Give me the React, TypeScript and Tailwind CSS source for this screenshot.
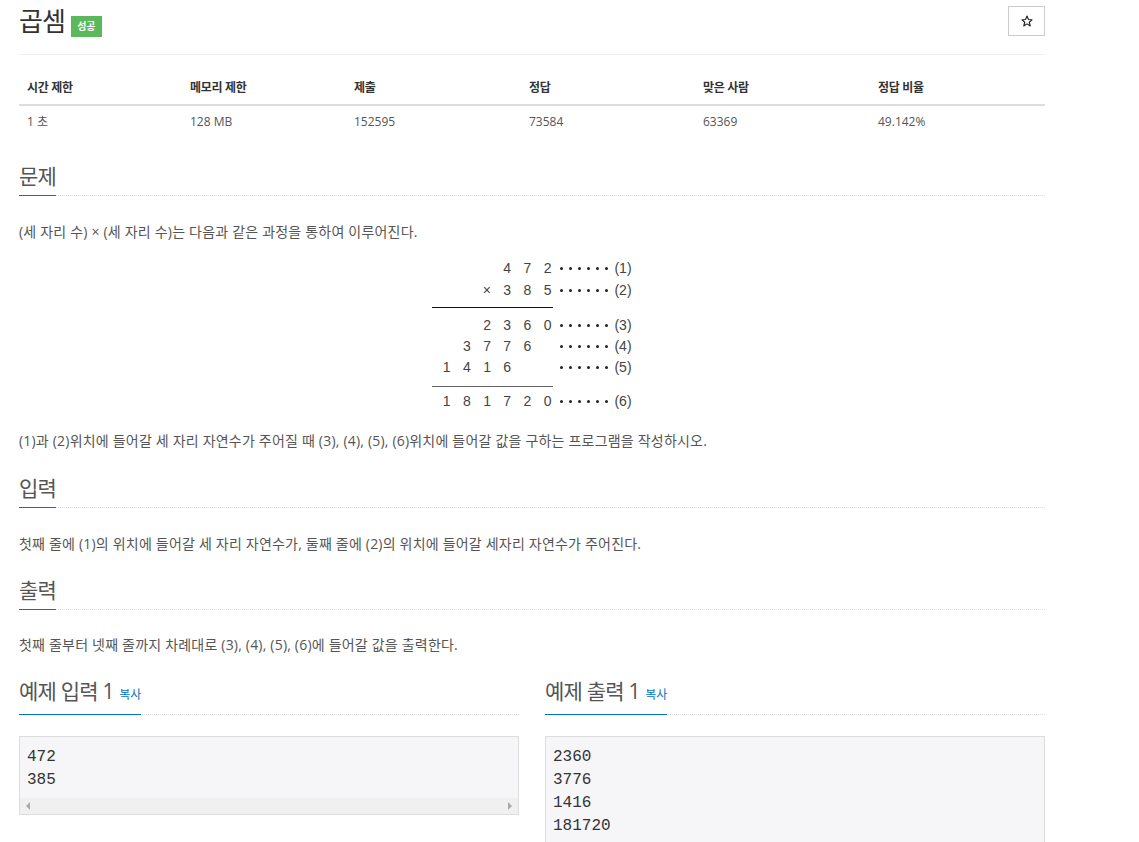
import React from "react";

const font = { fontFamily: '"Open Sans", "Noto Sans CJK KR", sans-serif' };

function Headline({ children, className = "" }: { children: React.ReactNode; className?: string }) {
  return (
    <div className={`border-b border-dotted border-[#ddd] ${className}`}>
      <h2 className="inline-block -mb-px border-b border-[#0076c0] pb-[5px] text-[21px] leading-[28px] font-normal text-[#555] tracking-[-0.8px]">
        {children}
      </h2>
    </div>
  );
}

function Dots() {
  return (
    <div className="flex w-[50px] items-center justify-between px-[1px]">
      {[0, 1, 2, 3, 4, 5].map((i) => (
        <span key={i} className="h-[3px] w-[3px] rounded-full bg-[#222]" />
      ))}
    </div>
  );
}

function FigRow({ cells, label, h = "h-[22px]" }: { cells: string[]; label: string; h?: string }) {
  return (
    <div className={`flex items-center ${h}`}>
      <div className="grid w-[121px] grid-cols-6">
        {cells.map((c, i) => (
          <span key={i} className="pr-[2px] text-right">
            {c}
          </span>
        ))}
      </div>
      <div className="ml-[6px]">
        <Dots />
      </div>
      <span className="ml-[5px]">{label}</span>
    </div>
  );
}

const cols = [
  ["시간 제한", "1 초", "w-[163px]"],
  ["메모리 제한", "128 MB", "w-[164px]"],
  ["제출", "152595", "w-[175px]"],
  ["정답", "73584", "w-[174px]"],
  ["맞은 사람", "63369", "w-[175px]"],
  ["정답 비율", "49.142%", ""],
];

export default function App() {
  return (
    <div className="min-h-screen bg-white" style={font}>
      <div className="ml-[19px] w-[1026px] text-[14px] text-[#555]">
        {/* title */}
        <div className="flex h-[55px] items-start justify-between border-b border-[#eee]">
          <div className="flex items-start pt-[6px]">
            <h1 className="text-[26px] leading-[30px] font-normal text-[#333] tracking-[-1px]">곱셈</h1>
            <span className="ml-[6px] mt-[10px] flex h-[21px] w-[31px] items-center justify-center bg-[#5cb85c] text-[10px] font-bold text-white">
              성공
            </span>
          </div>
          <button className="mt-[6px] flex h-[30px] w-[37px] items-center justify-center border border-[#ccc] bg-white">
            <svg width="12" height="12" viewBox="0 0 24 24" fill="none" stroke="#222" strokeWidth="2.2" strokeLinejoin="round">
              <polygon points="12,2 15,9 22,9.5 16.5,14.5 18.5,22 12,17.8 5.5,22 7.5,14.5 2,9.5 9,9" />
            </svg>
          </button>
        </div>

        {/* info table */}
        <table className="mt-[17px] w-full border-collapse">
          <thead>
            <tr className="h-[33px] border-b-2 border-[#ddd]">
              {cols.map(([h, , w]) => (
                <th key={h} className={`${w} pl-[8px] text-left text-[12px] font-bold text-[#333] tracking-[-0.3px]`}>
                  {h}
                </th>
              ))}
            </tr>
          </thead>
          <tbody>
            <tr className="h-[33px]">
              {cols.map(([h, v]) => (
                <td key={h} className="pl-[8px] text-[12px] text-[#555]">
                  {v}
                </td>
              ))}
            </tr>
          </tbody>
        </table>

        {/* 문제 */}
        <Headline className="mt-[24px]">문제</Headline>
        <p className="mt-[25px] leading-[22px] tracking-[0.2px]">(세 자리 수) × (세 자리 수)는 다음과 같은 과정을 통하여 이루어진다.</p>

        <div className="mt-[14px] flex justify-center">
          <div className="text-[14px] text-[#444]" style={{ fontFamily: '"Liberation Sans", sans-serif' }}>
            <FigRow cells={["", "", "", "4", "7", "2"]} label="(1)" />
            <FigRow cells={["", "", "×", "3", "8", "5"]} label="(2)" />
            <div className="my-[6px] h-px w-[121px] bg-[#111]" />
            <FigRow cells={["", "", "2", "3", "6", "0"]} label="(3)" />
            <FigRow cells={["", "3", "7", "7", "6", ""]} label="(4)" h="h-[21px]" />
            <FigRow cells={["1", "4", "1", "6", "", ""]} label="(5)" h="h-[21px]" />
            <div className="mb-[3px] mt-[8px] h-px w-[121px] bg-[#666]" />
            <FigRow cells={["1", "8", "1", "7", "2", "0"]} label="(6)" />
          </div>
        </div>

        <p className="mt-[18px] leading-[22px] tracking-[0.2px]">
          (1)과 (2)위치에 들어갈 세 자리 자연수가 주어질 때 (3), (4), (5), (6)위치에 들어갈 값을 구하는 프로그램을 작성하시오.
        </p>

        {/* 입력 */}
        <Headline className="mt-[22px]">입력</Headline>
        <p className="mt-[25px] leading-[22px] tracking-[0.2px]">
          첫째 줄에 (1)의 위치에 들어갈 세 자리 자연수가, 둘째 줄에 (2)의 위치에 들어갈 세자리 자연수가 주어진다.
        </p>

        {/* 출력 */}
        <Headline className="mt-[21px]">출력</Headline>
        <p className="mt-[24px] leading-[22px] tracking-[0.2px]">
          첫째 줄부터 넷째 줄까지 차례대로 (3), (4), (5), (6)에 들어갈 값을 출력한다.
        </p>

        {/* samples */}
        <div className="mt-[21px] grid grid-cols-2 gap-[26px]">
          <div>
            <Headline>
              예제 입력 1 <span className="ml-[1px] text-[12px] text-[#0076c0] tracking-normal">복사</span>
            </Headline>
            <div className="mt-[21px] border border-[#ddd] bg-[#f6f6f8]">
              <pre className="px-[7px] pb-[6px] pt-[9px] text-[16px] leading-[23px] text-[#333]" style={{ fontFamily: '"Liberation Mono", monospace' }}>
                {"472\n385"}
              </pre>
              <div className="flex h-[16px] items-center justify-between bg-[#f0f0f0] px-[6px]">
                <span className="h-0 w-0 border-y-[4px] border-r-[4px] border-y-transparent border-r-[#aaa]" />
                <span className="h-0 w-0 border-y-[4px] border-l-[4px] border-y-transparent border-l-[#aaa]" />
              </div>
            </div>
          </div>
          <div>
            <Headline>
              예제 출력 1 <span className="ml-[1px] text-[12px] text-[#0076c0] tracking-normal">복사</span>
            </Headline>
            <div className="mt-[21px] border border-[#ddd] bg-[#f6f6f8]">
              <pre className="px-[7px] pb-[10px] pt-[9px] text-[16px] leading-[23px] text-[#333]" style={{ fontFamily: '"Liberation Mono", monospace' }}>
                {"2360\n3776\n1416\n181720"}
              </pre>
            </div>
          </div>
        </div>
      </div>
    </div>
  );
}
